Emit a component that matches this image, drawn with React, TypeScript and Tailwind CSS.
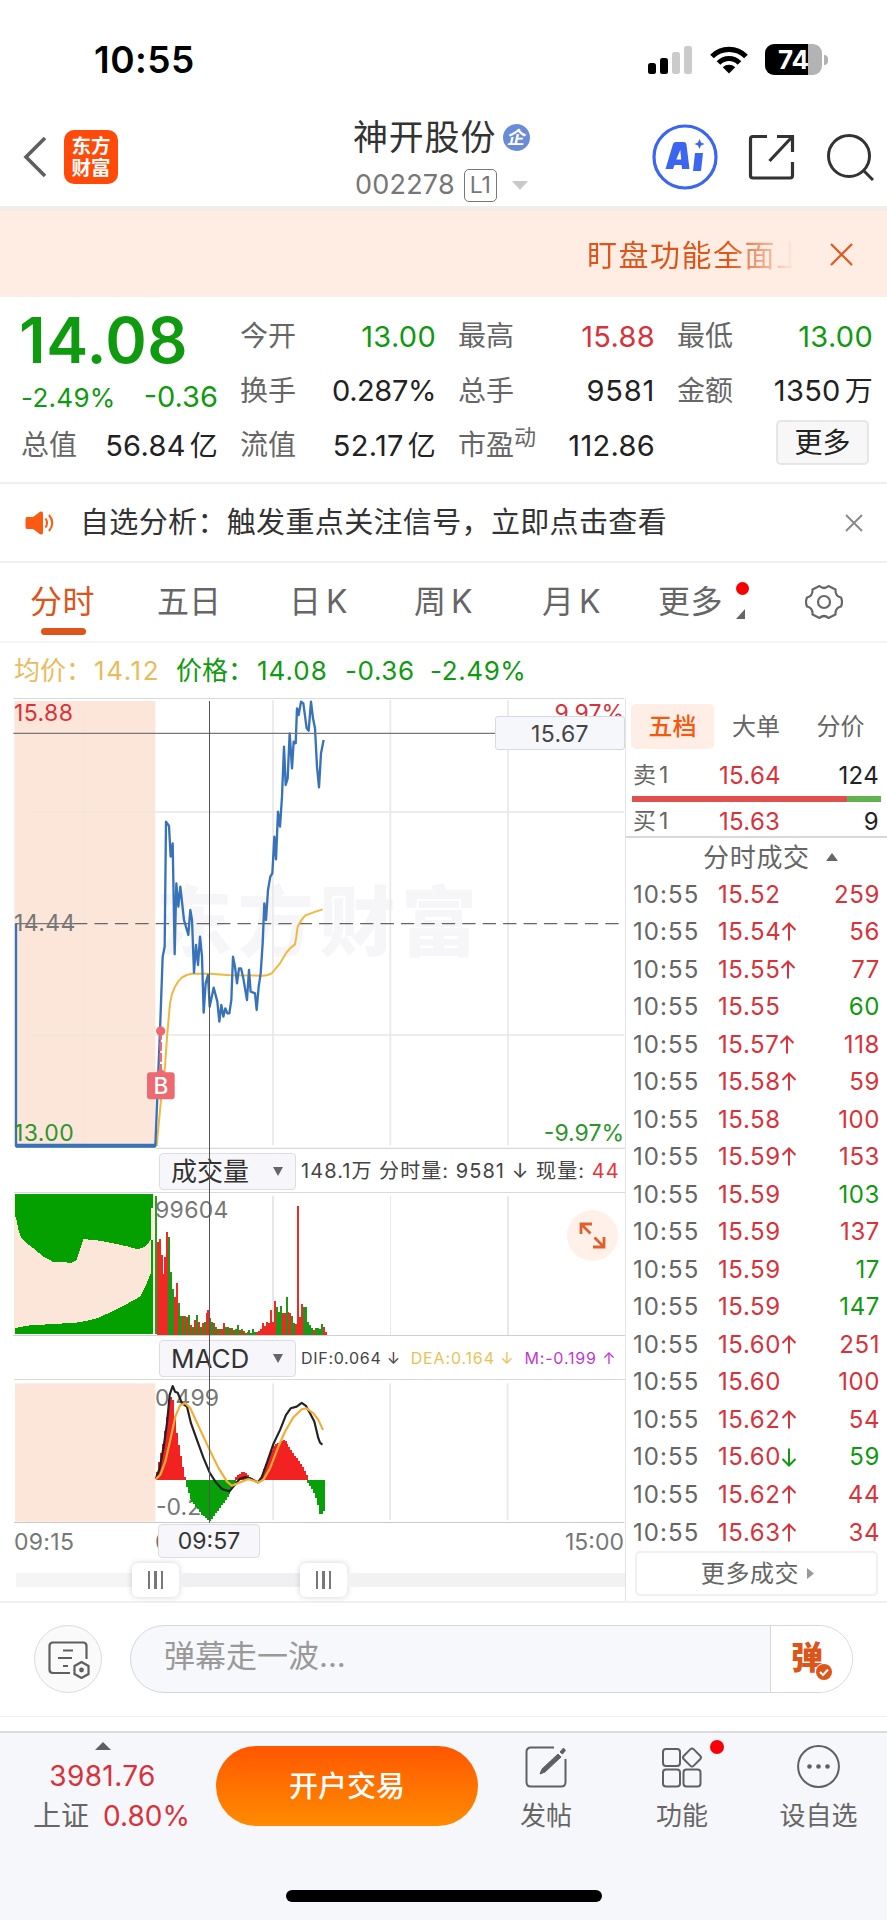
import type { ReactNode } from "react";

type Trade = {
    price: string;
    dir?: "up" | "down";
    volume: number;
    side: "buy" | "sell";
};

type Point = [number, number];

const trades: Trade[] = [
    { price: "15.52", volume: 259, side: "buy" },
    { price: "15.54", dir: "up", volume: 56, side: "buy" },
    { price: "15.55", dir: "up", volume: 77, side: "buy" },
    { price: "15.55", volume: 60, side: "sell" },
    { price: "15.57", dir: "up", volume: 118, side: "buy" },
    { price: "15.58", dir: "up", volume: 59, side: "buy" },
    { price: "15.58", volume: 100, side: "buy" },
    { price: "15.59", dir: "up", volume: 153, side: "buy" },
    { price: "15.59", volume: 103, side: "sell" },
    { price: "15.59", volume: 137, side: "buy" },
    { price: "15.59", volume: 17, side: "sell" },
    { price: "15.59", volume: 147, side: "sell" },
    { price: "15.60", dir: "up", volume: 251, side: "buy" },
    { price: "15.60", volume: 100, side: "buy" },
    { price: "15.62", dir: "up", volume: 54, side: "buy" },
    { price: "15.60", dir: "down", volume: 59, side: "sell" },
    { price: "15.62", dir: "up", volume: 44, side: "buy" },
    { price: "15.63", dir: "up", volume: 34, side: "buy" },
];

// All chart data is in thirds of a pixel
const priceLine =
    "48,700 48,1368 466,1368 480,1022 488,800 494,770 498,395 507,408 512,500 518,460 524,793 529,580 535,650 541,590 552,690 565,735 571,660 576,690 582,848 588,765 594,825 600,740 606,800 611,968 617,880 624,855 629,950 641,893 652,935 658,995 664,945 670,980 676,955 682,970 688,970 694,930 699,800 705,830 711,880 717,835 723,835 730,865 741,930 747,840 752,905 765,910 770,960 776,890 782,850 788,760 793,640 798,690 804,600 811,560 817,550 823,440 828,508 834,365 840,410 846,320 852,170 857,285 863,265 869,130 876,235 881,155 887,160 891,55 896,75 903,35 910,40 920,115 926,122 933,35 939,85 945,115 951,230 957,292 963,190 971,150";

const averageLine =
    "470,1368 482,1240 495,1130 502,1030 510,940 516,912 525,890 535,874 545,863 560,855 575,851 630,851 690,856 790,857 803,855 815,850 840,820 860,787 873,772 885,763 889,740 893,710 903,692 915,677 940,667 968,658";

const difLine =
    "466,1018 478,985 490,920 500,850 508,765 517,738 524,755 532,758 545,790 560,800 572,850 590,900 610,955 628,998 645,1025 665,1048 688,1055 700,1040 718,1018 735,1012 755,1018 773,1028 785,1012 800,970 820,912 840,870 858,825 872,805 890,800 905,789 918,798 930,820 943,845 955,895 960,908 967,915";

const deaLine =
    "466,1018 480,1005 495,965 510,900 525,830 540,795 555,790 570,805 600,870 628,930 655,985 680,1025 695,1038 715,1030 745,1018 775,1028 790,1020 810,985 835,920 855,875 880,832 905,808 920,805 940,820 955,840 969,870";

const volumeBars =
    "305r 297r 345r 403r 350r 277r 292g 395g 447g 470r 428r 490g 527g 527r 527g 530r 525g 555r 562g 540r 525g 545r 560g 548r 545g 518r 510r 535g 545g 550r 562g 568r 568g 566r 548r 560g 562g 565r 563g 570r 567g 556g 570r 568g 572r 578g 575r 570g 578g 568g 575g 575r 572r 568r 550r 558r 545r 550r 510r 545r 482r 500g 515g 498g 520r 518r 472g 515r 520r 528g 550g 552r 198r 530r 493r 500g 502g 545g 555g 565g 570r 563g 565g 568g 552g 560r 575r".split(" ");

const macdSegments: { color: string; points: Point[] }[] = [
    { color: "#f22222", points: [[468, 1005], [490, 900], [508, 768], [517, 780], [530, 890], [545, 975], [553, 1015]] },
    { color: "#08a008", points: [[556, 1035], [570, 1080], [590, 1105], [605, 1125], [628, 1145], [650, 1115], [680, 1075], [703, 1030]] },
    { color: "#f22222", points: [[705, 1014], [728, 993], [752, 1016]] },
    { color: "#f22222", points: [[783, 1010], [805, 950], [822, 915], [852, 898], [875, 935], [905, 975], [922, 1010]] },
    { color: "#08a008", points: [[922, 1028], [938, 1050], [950, 1080], [958, 1122], [966, 1122], [974, 1108]] },
];

function interpolate(points: Point[], x: number) {
    for (let i = 1; i < points.length; i++) {
        const [x0, y0] = points[i - 1];
        const [x1, y1] = points[i];
        if (x <= x1) return y0 + ((y1 - y0) * (x - x0)) / (x1 - x0);
    }
    return points[points.length - 1][1];
}

function stepBars(points: Point[], base: number) {
    const bars: { x: number; y: number; height: number }[] = [];
    const end = points[points.length - 1][0];
    for (let x = points[0][0]; x < end; x += 5.86) {
        const y = interpolate(points, x + 2);
        bars.push({ x, y: Math.min(y, base), height: Math.abs(y - base) });
    }
    return bars;
}

function StatusBar() {
    return (
        <div className="flex h-[110px] items-center justify-between pt-[9px] pr-[59px] pl-[94px]">
            <span className="text-[37px] font-semibold tracking-[0.500px] text-black">10:55</span>
            <div className="flex items-center">
                <svg width="45" height="30" viewBox="0 0 45 30">
                    <rect x="0" y="18" width="8" height="11" rx="2.5" fill="#000" />
                    <rect x="12" y="13" width="8" height="16" rx="2.5" fill="#000" />
                    <rect x="24" y="7" width="8" height="22" rx="2.5" fill="#cbcbcb" />
                    <rect x="36" y="1" width="8" height="28" rx="2.5" fill="#cbcbcb" />
                </svg>
                <svg width="38" height="28" viewBox="0 0 38 28" className="ml-[17px]" fill="none" stroke="#000" strokeWidth="5.2">
                    <path d="M2 10.5 C11.5 1 26.500 1 36 10.500" />
                    <path d="M8.500 17 C14.500 11 23.500 11 29.500 17" />
                    <path d="M19 27.500 L12.800 21.200 C16.300 17.900 21.700 17.900 25.200 21.200 Z" fill="#000" stroke="none" />
                </svg>
                <div className="ml-[17px] flex h-[31px] w-[57px] items-center justify-center rounded-[9px] bg-[linear-gradient(90deg,#000_75%,#b3b3b3_75%)] text-[26px] font-bold text-white">
                    74
                </div>
                <div className="ml-[2px] h-[10px] w-[4px] rounded-r-full bg-[#b3b3b3]" />
            </div>
        </div>
    );
}

function Header() {
    return (
        <header className="flex h-[96px] items-center pb-[2px]">
            <svg width="24" height="42" viewBox="0 0 24 42" className="ml-[23px]" fill="none" stroke="#5f5f5f" strokeWidth="3.600">
                <path d="M22 2 L3 21 L22 40" />
            </svg>
            <div className="ml-[17px] flex h-[54px] w-[54px] flex-col items-center justify-center rounded-[10px] bg-[#ff4a0a] text-[19.5px] leading-[22px] font-bold text-white">
                <span>东方</span>
                <span>财富</span>
            </div>
            <div className="ml-[235px] flex w-[180px] flex-col pt-[7px]">
                <div className="flex h-[49px] items-center">
                    <span className="text-[35px] tracking-[0.800px] whitespace-nowrap text-[#333]">神开股份</span>
                    <span className="ml-[7px] flex h-[27px] w-[27px] shrink-0 items-center justify-center rounded-full bg-[#6a8bd8] text-[18px] font-bold text-white">
                        <span className="-skew-x-12">企</span>
                    </span>
                </div>
                <div className="flex h-[46px] items-center text-[#777]">
                    <span className="pl-[2px] text-[27px] tracking-[0.200px]">002278</span>
                    <span className="ml-[9px] flex h-[33px] w-[33px] shrink-0 items-center justify-center rounded-[5px] border border-[#777] text-[23px]">
                        L1
                    </span>
                    <svg width="16" height="9" viewBox="0 0 16 9" className="ml-[15px] shrink-0">
                        <path d="M0 0 H16 L8 9 Z" fill="#c9c9c9" />
                    </svg>
                </div>
            </div>
            <svg width="66" height="66" viewBox="0 0 66 66" className="ml-[119px]">
                <circle cx="33" cy="33" r="31" fill="none" stroke="#3c66f0" strokeWidth="3.200" />
                <path
                    d="M24 18 H32 Q34 18 34.400 20 L37.500 45 H30 L29.600 41 H22.500 L21 45 H13.500 L21 20 Q21.700 18 24 18 Z M28.300 26 L24.300 35.500 H29.200 Z"
                    fill="#3c66f0"
                    fillRule="evenodd"
                />
                <path d="M43 29 H51 L49 47 H41 Z" fill="#3c66f0" />
                <path d="M47.500 15 L49 18.500 L52.500 20 L49 21.500 L47.500 25 L46 21.500 L42.500 20 L46 18.500 Z" fill="#3c66f0" />
            </svg>
            <svg width="47" height="47" viewBox="0 0 47 47" className="ml-[30px]" fill="none" stroke="#333" strokeWidth="3.200">
                <path d="M19 2.500 H5 Q2.500 2.500 2.500 5 V41.500 Q2.500 44 5 44 H42 Q44.500 44 44.500 41.500 V28" />
                <path d="M29 2.500 H44.500 V18 M44.500 2.500 L21.500 27" />
            </svg>
            <svg width="48" height="48" viewBox="0 0 48 48" className="ml-[31px]" fill="none" stroke="#333" strokeWidth="3">
                <circle cx="23" cy="23" r="20.500" />
                <path d="M37 37 L47 47" />
            </svg>
        </header>
    );
}

function Banner() {
    return (
        <div className="flex h-[91px] items-center justify-end border-t-[5px] border-[#f3ede9] bg-[#ffede4]">
            <span className="mt-[2px] w-[206px] overflow-hidden bg-[linear-gradient(90deg,#dd5518_68%,#ffede4_101%)] bg-clip-text text-[30px] tracking-[1.500px] whitespace-nowrap text-transparent">
                盯盘功能全面上
            </span>
            <svg width="23" height="23" viewBox="0 0 23 23" className="mr-[34px] ml-[37px]" fill="none" stroke="#e05a20" strokeWidth="2.200">
                <path d="M1 1 L22 22 M22 1 L1 22" />
            </svg>
        </div>
    );
}

function Quote({ label, children, color = "text-[#222]" }: { label: ReactNode; children: ReactNode; color?: string }) {
    return (
        <div className="flex h-[54.500px] items-center justify-between whitespace-nowrap">
            <span className="text-[28px] text-[#666]">{label}</span>
            <span className={`text-[29px] tracking-[0.300px] ${color}`}>{children}</span>
        </div>
    );
}

function QuotePanel() {
    return (
        <section className="grid h-[185px] grid-cols-[197px_196px_197px_196px] gap-x-[22px] pt-[12px] pl-[21px]">
            <div>
                <div className="ml-[-2px] flex h-[62px] items-center text-[63px] font-semibold tracking-[0.500px] text-[#109a10]">14.08</div>
                <div className="flex h-[47px] items-center justify-between pt-[5px] text-[#109a10]">
                    <span className="text-[26px] tracking-[0.300px]">-2.49%</span>
                    <span className="text-[29px]">-0.36</span>
                </div>
                <Quote label="总值">
                    56.84<span className="ml-1 text-[28px]">亿</span>
                </Quote>
            </div>
            <div>
                <Quote label="今开" color="text-[#109a10]">13.00</Quote>
                <Quote label="换手">
                    <span className="tracking-[-0.400px]">0.287%</span>
                </Quote>
                <Quote label="流值">
                    52.17<span className="ml-1 text-[28px]">亿</span>
                </Quote>
            </div>
            <div>
                <Quote label="最高" color="text-[#d8323a]">15.88</Quote>
                <Quote label="总手">
                    <span className="tracking-[0.800px]">9581</span>
                </Quote>
                <Quote label={<>市盈<sup className="top-[-10px] text-[22px] leading-none">动</sup></>}>112.86</Quote>
            </div>
            <div>
                <Quote label="最低" color="text-[#109a10]">13.00</Quote>
                <Quote label="金额">
                    1350<span className="ml-1 text-[28px]">万</span>
                </Quote>
                <div className="flex justify-end pr-1">
                    <button className="mt-[2px] h-[45px] w-[93px] rounded-[5px] border-2 border-[#e6e6e6] bg-[#f7f7f7] text-[28px] leading-[38px] text-[#222]">
                        更多
                    </button>
                </div>
            </div>
        </section>
    );
}

function Notice() {
    return (
        <div className="flex h-[81px] items-center border-t-2 border-b-2 border-[#efefef]">
            <svg width="30" height="24" viewBox="0 0 30 24" className="ml-[25px]">
                <path d="M2 6 H8 L15 0.800 Q18 -0.500 18 2.500 V21.500 Q18 24.500 15 23.200 L8 18 H2 Q0.500 18 0.500 16 V8 Q0.500 6 2 6 Z" fill="#fb5a12" />
                <path d="M20.500 7.500 Q23.500 12 20.500 16.500 M24 4 Q30.500 12 24 20" fill="none" stroke="#fb5a12" strokeWidth="2" />
            </svg>
            <span className="ml-[25px] flex-1 text-[29px] tracking-[0.350px] text-[#333]">自选分析：触发重点关注信号，立即点击查看</span>
            <svg width="18" height="18" viewBox="0 0 18 18" className="mr-[24px]" fill="none" stroke="#8a8a8a" strokeWidth="2">
                <path d="M1 1 L17 17 M17 1 L1 17" />
            </svg>
        </div>
    );
}

function PeriodTabs() {
    return (
        <nav className="flex h-[80px] items-center border-b-2 border-[#f5f5f5] text-[32px] whitespace-nowrap text-[#666] [word-spacing:-4px]">
            <div className="relative ml-[30px] w-[127px] tracking-[0.600px] text-[#dd5518]">
                分时
                <div className="absolute top-[50px] left-[11px] h-[7px] w-[45px] rounded-full bg-[#dd5518]" />
            </div>
            <div className="w-[132px]">五日</div>
            <div className="w-[125px]">日 K</div>
            <div className="w-[128px]">周 K</div>
            <div className="w-[116px]">月 K</div>
            <div className="relative w-[147px] tracking-[0.600px]">
                更多
                <span className="absolute top-[4px] left-[78px] h-[13px] w-[13px] rounded-full bg-[#f90000]" />
                <svg width="9" height="10" viewBox="0 0 9 10" className="absolute top-[31px] left-[78px]">
                    <path d="M9 0 V10 H0 Z" fill="#666" />
                </svg>
            </div>
            <svg width="38" height="36" viewBox="0 0 38 36" fill="none" stroke="#666" strokeWidth="2.200">
                <path d="M14.500 2 Q19 6 23.500 2 L30.500 5.500 Q30 12 36 13.500 Q38 18 36 22.500 Q30 24 30.500 30.500 L23.500 34 Q19 30 14.500 34 L7.500 30.500 Q8 24 2 22.500 Q0 18 2 13.500 Q8 12 7.500 5.500 Z" strokeLinejoin="round" />
                <circle cx="19" cy="18" r="6" />
            </svg>
        </nav>
    );
}

function Legend() {
    return (
        <div className="flex h-[55px] items-center pl-[14px] text-[26px] whitespace-nowrap text-[#109a10]">
            <span className="flex w-[162px] text-[#e8bc5c]">
                均价：<span className="ml-[2px] tracking-[1.600px]">14.12</span>
            </span>
            <span className="flex w-[169px]">
                价格：<span className="ml-[3px] tracking-[1px]">14.08</span>
            </span>
            <span className="w-[85px] tracking-[0.600px]">-0.36</span>
            <span className="tracking-[0.600px]">-2.49%</span>
        </div>
    );
}

function GridLines({ top, bottom }: { top: number; bottom: number }) {
    return (
        <g stroke="#e8e8eb" strokeWidth="5">
            {[819, 1171, 1524].map((x) => (
                <line key={x} x1={x} x2={x} y1={top} y2={bottom} />
            ))}
        </g>
    );
}

function PriceChart() {
    return (
        <div className="relative h-[451px] text-[23px] leading-[26px] tracking-[0.400px]">
            <svg width="625" height="451" viewBox="0 24 1875 1353" fill="none" className="block">
                <rect x="43" y="33" width="423" height="1340" fill="#fce6da" />
                <text x="468" y="780" fontSize="228" fontWeight="900" letterSpacing="17" fill="#f6f6f8">东方财富</text>
                <GridLines top={30} bottom={1366} />
                <path d="M466 366 H1872 M466 1035 H1872" stroke="#e8e8eb" strokeWidth="5" />
                <path d="M95 366 H466 M95 1035 H466 M252 60 V1360" stroke="#f5e3db" strokeWidth="4" />
                <path d="M40 25 H1872 M466 1375 H1875" stroke="#d9d9dd" strokeWidth="4" />
                <path d="M48 701 H222" stroke="#777" strokeWidth="4" />
                <path d="M222 701 H1872" stroke="#666" strokeWidth="4" strokeDasharray="40 21.300" />
                <polyline points={averageLine} stroke="#f0b840" strokeWidth="6" strokeLinejoin="round" />
                <polyline points={priceLine} stroke="#3872b8" strokeWidth="7" strokeLinejoin="round" />
                <path d="M48 1367 H466" stroke="#3872b8" strokeWidth="12" />
                <path d="M40 130 H1760" stroke="#777" strokeWidth="3.500" />
                <circle cx="482" cy="1023" r="14" fill="#ec6a70" />
                <path d="M482 1023 V1145" stroke="#ec6a70" strokeWidth="8" strokeDasharray="26 7" />
                <path d="M468 1147 L482 1135 L496 1147 H515 Q524 1147 524 1156 V1219 Q524 1228 515 1228 H450 Q441 1228 441 1219 V1156 Q441 1147 450 1147 Z" fill="#ec6a70" />
                <text x="483" y="1212" fontSize="68" textAnchor="middle" fill="#fff" fontWeight="500">B</text>
            </svg>
            <span className="absolute top-[2px] left-[14px] text-[#d8323a]">15.88</span>
            <span className="absolute top-[212px] left-[14px] text-[#777]">14.44</span>
            <span className="absolute top-[422px] left-[14px] text-[#2b962b]">13.00</span>
            <span className="absolute top-[2px] right-[1px] tracking-normal text-[#d8323a]">9.97%</span>
            <span className="absolute right-[1px] bottom-[3px] tracking-normal text-[#2b962b]">-9.97%</span>
            <div className="absolute top-[18px] right-0 flex h-[34px] w-[130px] items-center justify-center rounded-[3px] border border-[#d5dae2] bg-[#f6f7fb] pt-px text-[#444]">
                15.67
            </div>
        </div>
    );
}

function IndicatorBar({ name, children }: { name: string; children: ReactNode }) {
    return (
        <div className="ml-[14px] flex h-[44px] items-center border-b border-[#d9d9dd] pt-px pl-[145px] whitespace-nowrap">
            <div className="flex h-[37px] w-[137px] shrink-0 items-center justify-between rounded-[4px] border border-[#dcdce2] bg-[#f7f7fb] pr-[12px] pl-[11px] text-[26px] text-[#333]">
                {name}
                <svg width="10" height="9" viewBox="0 0 10 9">
                    <path d="M0 0 H10 L5 9 Z" fill="#666" />
                </svg>
            </div>
            {children}
        </div>
    );
}

function VolumeChart() {
    return (
        <div className="relative h-[143px]">
            <svg width="625" height="143" viewBox="0 159 1875 429" className="block" shapeRendering="crispEdges">
                <rect x="43" y="161" width="415" height="422" fill="#fce6da" />
                <GridLines top={168} bottom={585} />
                <g fill="#04a000">
                    <path d="M44 161 H458 V205 H453 V298 L446 308 L435 320 L415 328 L385 320 L350 312 L300 302 L250 297 L240 330 L230 360 L215 368 L160 366 L130 350 L100 325 L80 310 L62 290 L55 270 L50 240 L44 225 Z" />
                    <path d="M44 583 V564 L90 556 L180 551 L240 547 L290 535 L340 513 L380 492 L420 470 L440 430 L452 400 V300 H458 V583 Z" />
                </g>
                <path d="M465 168 H470 V583 H465 Z" fill="#2f9a1f" />
                <path d="M459 161 H465 V583 H459 Z" fill="#f6fbe8" />
                {volumeBars.map((bar, i) => {
                    const y = parseInt(bar);
                    return (
                        <rect key={i} x={470 + i * 5.86} y={y} width="5.860" height={584 - y} fill={bar.endsWith("r") ? "#ee2a24" : "#1f951a"} />
                    );
                })}
                <path d="M40 587 H1875" stroke="#cfcfd4" strokeWidth="4" />
            </svg>
            <span className="absolute top-[4px] left-[155px] text-[23px] leading-[26px] tracking-[0.300px] text-[#777]">99604</span>
            <div className="absolute top-[17px] right-[7px] flex h-[51px] w-[51px] items-center justify-center rounded-full bg-[#fff1ea]">
                <svg width="27" height="27" viewBox="0 0 27 27" fill="none" stroke="#e0602c" strokeWidth="2.800">
                    <path d="M2 12 V2 H13 M2 2 L11.500 11.500" />
                    <path d="M25 15 V25 H14 M25 25 L15.500 15.500" />
                </svg>
            </div>
        </div>
    );
}

function MacdChart() {
    return (
        <div className="relative h-[143px] text-[23px] leading-[26px] text-[#777]">
            <span className="absolute top-[5px] left-[155px]">0.499</span>
            <span className="absolute top-[114px] left-[156px]">-0.2</span>
            <svg width="625" height="143" viewBox="0 720 1875 430" className="relative block" fill="none">
                <rect x="43" y="730" width="422" height="416" fill="#fce6da" />
                <GridLines top={730} bottom={1142} />
                {macdSegments.map((segment, i) => (
                    <g key={i} fill={segment.color} shapeRendering="crispEdges">
                        {stepBars(segment.points, 1020).map((bar) => (
                            <rect key={bar.x} x={bar.x} y={bar.y} width="6" height={bar.height} />
                        ))}
                    </g>
                ))}
                <polyline points={difLine} stroke="#222" strokeWidth="6.500" strokeLinejoin="round" />
                <polyline points={deaLine} stroke="#f5ac35" strokeWidth="6.500" strokeLinejoin="round" />
                <path d="M40 1149 H1875" stroke="#c9c9ce" strokeWidth="4" />
            </svg>
        </div>
    );
}

function SliderHandle() {
    return (
        <div className="flex h-[34px] w-[47px] items-center justify-center gap-[4px] rounded-[6px] bg-white shadow-[0_0_6px_rgba(0,0,0,0.18)]">
            <i className="h-[18px] w-[2.500px] bg-[#777]" />
            <i className="h-[18px] w-[2.500px] bg-[#777]" />
            <i className="h-[18px] w-[2.500px] bg-[#777]" />
        </div>
    );
}

function Charts() {
    return (
        <div className="relative w-[625px]">
            <PriceChart />
            <IndicatorBar name="成交量">
                <span className="ml-[5px] text-[20px] tracking-[1.050px] text-[#444]">
                    148.1万 分时量: 9581 ↓ 现量: <span className="text-[#e5333a]">44</span>
                </span>
            </IndicatorBar>
            <VolumeChart />
            <IndicatorBar name="MACD">
                <span className="ml-[5px] flex gap-[10px] text-[16px] tracking-[0.700px] text-[#444]">
                    <span>DIF:0.064 ↓</span>
                    <span className="tracking-[0.850px] text-[#eac253]">DEA:0.164 ↓</span>
                    <span className="tracking-[0.850px] text-[#c03ad0]">M:-0.199 ↑</span>
                </span>
            </IndicatorBar>
            <MacdChart />
            <div className="relative flex h-[37px] items-center justify-between pt-px pr-px pl-[14px] text-[23px] text-[#777]">
                <span className="tracking-[0.300px]">09:15</span>
                <span>15:00</span>
                <span className="absolute left-[155px]">09:30</span>
                <span className="absolute top-[1px] left-[158px] flex h-[34px] w-[102px] items-center justify-center rounded-[4px] border border-[#dcdce2] bg-[#f7f7fb] text-[#333]">
                    09:57
                </span>
            </div>
            <div className="flex h-[39px] items-center pl-4">
                <div className="h-[14px] w-[116px] bg-[#f5f5f6]" />
                <SliderHandle />
                <div className="h-[14px] w-[121px] bg-[#f0f0f2]" />
                <SliderHandle />
                <div className="h-[14px] flex-1 bg-[#f2f2f2]" />
            </div>
            <div className="absolute top-[3px] left-[209px] h-[822px] w-px bg-[#555]" />
        </div>
    );
}

function TradeArrow({ dir }: { dir: "up" | "down" }) {
    return (
        <svg
            width="16"
            height="20"
            viewBox="0 0 16 20"
            className={dir === "up" ? "" : "rotate-180 text-[#109a10]"}
            fill="none"
            stroke="currentColor"
            strokeWidth="2"
        >
            <path d="M8 18.500 V1.500 M1.500 8 L8 1.500 L14.500 8" />
        </svg>
    );
}

function OrderBook() {
    return (
        <aside className="w-[262px] border-l border-[#e4e4e8]">
            <div className="mt-[6px] ml-[5px] flex h-[45px] text-[24px] text-[#666]">
                <span className="flex w-[83px] items-center justify-center rounded-[5px] bg-[#ffeee6] font-medium text-[#f3590f]">五档</span>
                <span className="flex w-[84px] items-center justify-center">大单</span>
                <span className="flex w-[85px] items-center justify-center">分价</span>
            </div>
            <div className="mt-[6px] flex h-[41px] items-center pr-[8px] pl-[7px] text-[24px] tracking-[0.300px]">
                <span className="w-[86px] text-[23px] text-[#666] [word-spacing:-4px]">卖 1</span>
                <span className="text-[#d8323a]">15.64</span>
                <span className="ml-auto text-[#222]">124</span>
            </div>
            <div className="mr-[6px] ml-[6px] flex h-[6px]">
                <div className="w-[215px] bg-[#e0504f]" />
                <div className="flex-1 bg-[#62b350]" />
            </div>
            <div className="flex h-[36px] items-center border-b-2 border-[#d9d9dc] pt-[5px] pr-[8px] pl-[7px] text-[24px] tracking-[0.300px]">
                <span className="w-[86px] text-[23px] text-[#666] [word-spacing:-4px]">买 1</span>
                <span className="text-[#d8323a]">15.63</span>
                <span className="ml-auto text-[#222]">9</span>
            </div>
            <div className="flex h-[38px] items-center pl-[77px] text-[26px] tracking-[0.700px] text-[#666]">
                分时成交
                <svg width="12" height="8" viewBox="0 0 12 8" className="ml-[16px]">
                    <path d="M0 8 H12 L6 0 Z" fill="#666" />
                </svg>
            </div>
            {trades.map((trade, i) => (
                <div key={i} className="flex h-[37.530px] items-center pr-[7px] pl-[7px] text-[24px] tracking-[0.600px]">
                    <span className="w-[85px] tracking-[1.100px] text-[#666]">10:55</span>
                    <span className="flex items-center text-[#d8323a]">
                        {trade.price}
                        {trade.dir && <TradeArrow dir={trade.dir} />}
                    </span>
                    <span className={`ml-auto ${trade.side === "buy" ? "text-[#d8323a]" : "text-[#109a10]"}`}>{trade.volume}</span>
                </div>
            ))}
            <button className="ml-[9px] flex h-[45px] w-[243px] items-center justify-center rounded-[5px] border-2 border-[#f0f0f0] pl-[2px] text-[24px] tracking-[0.600px] text-[#666]">
                更多成交
                <svg width="7" height="11" viewBox="0 0 7 11" className="ml-[8px]">
                    <path d="M0 0 V11 L7 5.500 Z" fill="#999" />
                </svg>
            </button>
        </aside>
    );
}

function BarrageBar() {
    return (
        <div className="flex h-[116px] items-center border-t-2 border-b border-[#f0f0f0] pb-px pl-[34px]">
            <div className="flex h-[68px] w-[68px] items-center justify-center rounded-full border border-[#dcdcdc] bg-[#fafafa]">
                <svg width="42" height="38" viewBox="0 0 42 38" className="mt-[2px] ml-[2px]" fill="none" stroke="#5f5f5f" strokeWidth="2.200">
                    <path d="M22 32 H5 Q1.500 32 1.500 28.500 V5 Q1.500 1.500 5 1.500 H35 Q38.500 1.500 38.500 5 V18" />
                    <path d="M15 9.500 H25 M10 17 H24 M15 25 H20" />
                    <path d="M33.500 21 L40.500 25 V33 L33.500 37 L26.500 33 V25 Z" />
                    <circle cx="33.500" cy="29" r="1.300" />
                </svg>
            </div>
            <div className="ml-[28px] flex h-[68px] w-[723px] overflow-hidden rounded-full border border-[#d5d8de] bg-[#f6f8fb]">
                <span className="flex-1 pl-[33px] text-[31px] leading-[60px] text-[#999]">弹幕走一波...</span>
                <div className="relative w-[82px] border-l border-[#d5d8de] bg-white">
                    <span className="absolute top-[9px] left-[20px] text-[32px] leading-[46px] font-black text-[#dd5518]">弹</span>
                    <svg width="18" height="18" viewBox="0 0 18 18" className="absolute top-[37px] left-[44px]">
                        <circle cx="9" cy="9" r="9" fill="#fff" />
                        <circle cx="9" cy="9" r="8" fill="#dd5518" />
                        <path d="M5 9 L8 12 L13 6.500" fill="none" stroke="#fff" strokeWidth="2" />
                    </svg>
                </div>
            </div>
        </div>
    );
}

function BottomBar() {
    return (
        <footer className="mt-[14px] h-[189px] border-t-2 border-[#dcdcdc] bg-[#f6f7fa]">
            <div className="flex h-[110px] text-[26px] text-[#666]">
                <div className="flex w-[216px] flex-col items-center pt-[9px] pr-[11px] text-[28px] text-[#d8323a]">
                    <svg width="16" height="8" viewBox="0 0 16 8">
                        <path d="M0 8 H16 L8 0 Z" fill="#5f5f5f" />
                    </svg>
                    <span className="mt-[6px] leading-[40px] tracking-[0.400px]">3981.76</span>
                    <span className="pl-[18px] leading-[41px]">
                        <span className="mr-[14px] text-[#666]">上证</span>0.80%
                    </span>
                </div>
                <button className="mt-[13px] h-[80px] w-[262px] rounded-full bg-gradient-to-b from-[#ff5500] to-[#ff8a00] pt-px text-[29px] font-medium text-white">
                    开户交易
                </button>
                <div className="ml-[42px] flex w-[52px] flex-col items-center pt-[13px] whitespace-nowrap">
                    <svg width="42" height="42" viewBox="0 0 42 42" fill="none" stroke="#5f6062" strokeWidth="2">
                        <path d="M29 1.500 H6 Q1.500 1.500 1.500 6 V36 Q1.500 40.500 6 40.500 H36 Q40.500 40.500 40.500 36 V13" />
                        <path d="M15 28 L17 23 L33 8 L36 11 L20 26 Z M35 6 L38.500 2 L40.500 4.500 L37.500 8 Z" fill="#5f6062" strokeWidth="1" />
                    </svg>
                    <span className="mt-[9px] leading-[38px]">发帖</span>
                </div>
                <div className="relative ml-[84px] flex w-[52px] flex-col items-center pt-[13px] whitespace-nowrap">
                    <svg width="42" height="42" viewBox="0 0 42 42" fill="none" stroke="#5f6062" strokeWidth="2">
                        <rect x="2" y="3" width="17" height="17" rx="3" />
                        <rect x="2" y="23.500" width="17" height="17" rx="3" />
                        <rect x="22.500" y="23.500" width="17" height="17" rx="3" />
                        <rect x="24" y="4.500" width="14" height="14" rx="2.500" transform="rotate(45 31 11.500)" />
                    </svg>
                    <span className="mt-[9px] leading-[38px]">功能</span>
                    <span className="absolute top-[7px] left-[54px] h-[14px] w-[14px] rounded-full bg-[#f90008]" />
                </div>
                <div className="ml-[71px] flex w-[79px] flex-col items-center pt-[12px] whitespace-nowrap">
                    <svg width="43" height="43" viewBox="0 0 43 43" fill="#5f6062">
                        <circle cx="21.500" cy="21.500" r="20.400" fill="none" stroke="#5f6062" strokeWidth="2" />
                        <circle cx="12.500" cy="21.500" r="2.300" />
                        <circle cx="21.500" cy="21.500" r="2.300" />
                        <circle cx="30.500" cy="21.500" r="2.300" />
                    </svg>
                    <span className="mt-[9px] leading-[38px]">设自选</span>
                </div>
            </div>
            <div className="mx-auto mt-[47px] h-[12px] w-[316px] rounded-full bg-black" />
        </footer>
    );
}

export default function App() {
    return (
        <div className="flex h-[1920px] w-[887px] flex-col overflow-hidden bg-white font-['Inter','Noto_Sans_CJK_SC',sans-serif]">
            <StatusBar />
            <Header />
            <Banner />
            <QuotePanel />
            <Notice />
            <PeriodTabs />
            <Legend />
            <div className="flex h-[903px]">
                <Charts />
                <OrderBook />
            </div>
            <BarrageBar />
            <BottomBar />
        </div>
    );
}
